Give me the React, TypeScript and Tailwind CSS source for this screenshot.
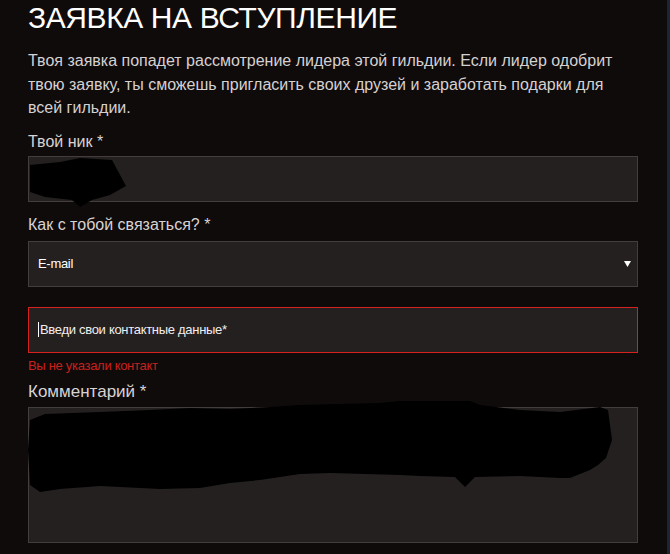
import React from "react";

const font = { fontFamily: '"Liberation Sans", Arial, sans-serif' };

const Label = ({ children, className = "" }: { children: React.ReactNode; className?: string }) => (
  <div className={`text-[16px] leading-[20px] text-[#d8d3d3] ${className}`}>{children}</div>
);

export default function App() {
  return (
    <div className="flex h-[554px] w-[670px] overflow-hidden bg-[#1c2630]" style={font}>
      <div className="h-full w-[667px] bg-[#0f0b0b] pl-[28px] pr-[29px]">
        {/* heading */}
        <h1 className="mt-[1px] text-[30px] leading-[34px] tracking-[-0.4px] text-white">
          ЗАЯВКА НА ВСТУПЛЕНИЕ
        </h1>
        <p className="mt-[14px] text-[16px] leading-[23.5px] text-[#d6d1d1]">
          Твоя заявка попадет рассмотрение лидера этой гильдии. Если лидер одобрит
          <br />
          твою заявку, ты сможешь пригласить своих друзей и заработать подарки для
          <br />
          всей гильдии.
        </p>

        {/* nickname */}
        <Label className="mt-[12px]">Твой ник *</Label>
        <div className="relative mt-[4px] h-[46px] border border-[#433d3d] bg-[#252020]">
          <svg className="absolute left-[-1px] top-[-1px] overflow-visible" width="100" height="52">
            <polygon
              points="2,9 32,6 52,2 84,4 98,30 82,39 64,44 52,51 44,44 17,41 2,36"
              fill="#000"
            />
          </svg>
        </div>

        {/* contact type */}
        <Label className="mt-[13px]">Как с тобой связаться? *</Label>
        <div className="mt-[6px] flex h-[46px] items-center justify-between border border-[#433d3d] bg-[#252020] pl-[9px] pr-[6px]">
          <span className="text-[13px] tracking-[-0.3px] text-white">E-mail</span>
          <svg width="7" height="6" viewBox="0 0 7 6">
            <polygon points="0,0 7,0 3.5,6" fill="#fff" />
          </svg>
        </div>

        {/* contact */}
        <div className="mt-[20px] flex h-[46px] items-center border border-[#d7211d] bg-[#252020] pl-[9px]">
          <span className="mr-[1px] h-[15px] w-[1px] bg-white" />
          <span className="text-[13px] tracking-[-0.3px] text-[#f2eeee]">Введи свои контактные данные*</span>
        </div>
        <div className="mt-[5px] text-[13px] leading-[16px] tracking-[-0.3px] text-[#c8201c]">
          Вы не указали контакт
        </div>

        {/* comment */}
        <Label className="mt-[8px] text-[17px]">Комментарий *</Label>
        <div className="relative mt-[5px] h-[136px] border border-[#433d3d] bg-[#252020]">
          <svg className="absolute left-[-1px] top-[-1px] overflow-visible" width="590" height="90">
            <polygon
              points="2,13 17,7 72,5 122,3 162,1 202,2 242,0 272,-2 312,-3 352,-4 372,-6 442,-6 452,-2 492,3 532,5 572,0 580,3 584,33 578,51 570,58 562,63 542,71 532,71 492,69 447,70 437,80 427,70 392,69 372,68 302,66 272,67 232,73 202,76 172,81 132,82 72,79 32,82 12,85 2,78 0,43"
              fill="#000"
            />
          </svg>
        </div>
      </div>
      <div className="flex-1 bg-[#1c2630]" />
    </div>
  );
}
